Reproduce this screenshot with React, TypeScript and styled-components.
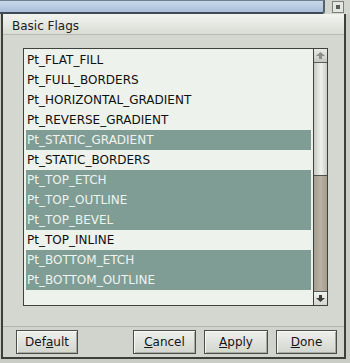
import React from "react";
import styled, { createGlobalStyle } from "styled-components";

const Global = createGlobalStyle`
  html, body { margin: 0; padding: 0; background: #c9cdc5; }
  body { font-family: "DejaVu Sans", "Liberation Sans", sans-serif; }
`;

const Window = styled.div`
  width: 350px;
  height: 363px;
  display: flex;
  flex-direction: column;
  background: #c9cdc5;
  overflow: hidden;
`;

const TitleRow = styled.div`
  height: 14px;
  display: flex;
  flex-direction: row;
`;

const TitleBar = styled.div`
  flex: 1;
  background: linear-gradient(#c8d8ea, #a9bfd9);
  border-top: 1px solid #6f7f90;
  border-bottom: 2px solid #3f4a55;
  border-right: 2px solid #55606a;
  border-radius: 0 0 3px 0;
`;

const MenuBox = styled.div`
  width: 25px;
  display: flex;
  align-items: center;
  justify-content: center;
  background: #d2d6ce;
`;

const MenuBtn = styled.div`
  width: 10px;
  height: 10px;
  border: 1px solid #7c807a;
  background: #e4e6e0;
  display: flex;
  align-items: center;
  justify-content: center;
  &::after {
    content: "";
    width: 4px;
    height: 4px;
    background: #5a5e58;
  }
`;

const Frame = styled.div`
  flex: 1;
  margin: 0 4px 4px 1px;
  border-left: 2px solid #3c3f3a;
  border-right: 2px solid #3c3f3a;
  border-bottom: 2px solid #3c3f3a;
  display: flex;
  flex-direction: column;
  background: #d3d7cf;
`;

const Header = styled.div`
  height: 21px;
  display: flex;
  align-items: flex-end;
  padding: 0 0 1px 9px;
  box-sizing: border-box;
  font-size: 12px;
  line-height: 14px;
  color: #202020;
  background: linear-gradient(#f3f4f0, #d8dcd4);
  border-bottom: 1px solid #b6bab2;
`;

const Body = styled.div`
  display: flex;
  padding: 13px 16px 0 20px;
`;

const ListBox = styled.div`
  flex: 1;
  height: 256px;
  display: flex;
  border: 1px solid #3e423c;
  background: #eef2ec;
`;

const Items = styled.div`
  flex: 1;
  padding: 1px 2px 0 2px;
  display: flex;
  flex-direction: column;
`;

const Item = styled.div<{ $sel?: boolean }>`
  height: 20px;
  line-height: 20px;
  padding-left: 1px;
  font-size: 12px;
  color: ${(p) => (p.$sel ? "#eef3ef" : "#101010")};
  background: ${(p) => (p.$sel ? "#7f9d94" : "transparent")};
  white-space: nowrap;
`;

const Scroll = styled.div`
  width: 13px;
  display: flex;
  flex-direction: column;
  border-left: 1px solid #3e423c;
  background: #b1aa9d;
`;

const Arrow = styled.div`
  height: 13px;
  background: linear-gradient(#e8eae6, #c4c8c0);
  border-bottom: 1px solid #5a5e58;
  display: flex;
  align-items: center;
  justify-content: center;
`;

const ArrowDown = styled(Arrow)`
  border-bottom: none;
  border-top: 1px solid #5a5e58;
  background: linear-gradient(#f0f2ee, #d4d8d0);
`;

const Thumb = styled.div`
  height: 112px;
  background: linear-gradient(90deg, #c6cac2, #f0f2ee 55%, #c8ccc4);
  border-bottom: 1px solid #4e524c;
`;

const Track = styled.div`
  flex: 1;
  background: linear-gradient(90deg, #a49d90, #b8b1a4 50%, #a49d90);
`;

const Footer = styled.div`
  margin-top: auto;
  height: 31px;
  box-sizing: border-box;
  border-top: 1px solid #b0b4ac;
  background: #d0d4cc;
  display: flex;
  align-items: flex-end;
  padding: 0 7px 3px 13px;
  gap: 8px;
`;

const Button = styled.button<{ $w: number }>`
  width: ${(p) => p.$w}px;
  height: 24px;
  border: 1px solid #4a4e48;
  box-shadow: inset 1px 1px 0 #f8f8f6, inset -1px -1px 0 #a6aaa2;
  background: linear-gradient(#eef0ec, #d2d6ce);
  font-family: "DejaVu Sans", sans-serif;
  font-size: 12px;
  color: #151515;
  padding: 0;
  u { text-decoration: underline; }
`;

const Spacer = styled.div`
  flex: 1;
`;

const items: [string, boolean][] = [
  ["Pt_FLAT_FILL", false],
  ["Pt_FULL_BORDERS", false],
  ["Pt_HORIZONTAL_GRADIENT", false],
  ["Pt_REVERSE_GRADIENT", false],
  ["Pt_STATIC_GRADIENT", true],
  ["Pt_STATIC_BORDERS", false],
  ["Pt_TOP_ETCH", true],
  ["Pt_TOP_OUTLINE", true],
  ["Pt_TOP_BEVEL", true],
  ["Pt_TOP_INLINE", false],
  ["Pt_BOTTOM_ETCH", true],
  ["Pt_BOTTOM_OUTLINE", true],
];

const Up = () => (
  <svg width="9" height="7" viewBox="0 0 9 7">
    <path d="M4.5 0 L9 4 L6 4 L6 7 L3 7 L3 4 L0 4 Z" fill="#8a8e88" />
  </svg>
);
const Down = () => (
  <svg width="9" height="7" viewBox="0 0 9 7">
    <path d="M4.5 7 L9 3 L6 3 L6 0 L3 0 L3 3 L0 3 Z" fill="#3a3e38" />
  </svg>
);

export default function App() {
  return (
    <Window>
      <Global />
      <TitleRow>
        <TitleBar />
        <MenuBox>
          <MenuBtn />
        </MenuBox>
      </TitleRow>
      <Frame>
        <Header>Basic Flags</Header>
        <Body>
          <ListBox>
            <Items>
              {items.map(([t, s]) => (
                <Item key={t} $sel={s}>
                  {t}
                </Item>
              ))}
            </Items>
            <Scroll>
              <Arrow>
                <Up />
              </Arrow>
              <Thumb />
              <Track />
              <ArrowDown>
                <Down />
              </ArrowDown>
            </Scroll>
          </ListBox>
        </Body>
        <Footer>
          <Button $w={62}>
            Def<u>a</u>ult
          </Button>
          <Spacer />
          <Button $w={63}>
            <u>C</u>ancel
          </Button>
          <Button $w={64}>
            <u>A</u>pply
          </Button>
          <Button $w={61}>
            <u>D</u>one
          </Button>
        </Footer>
      </Frame>
    </Window>
  );
}
